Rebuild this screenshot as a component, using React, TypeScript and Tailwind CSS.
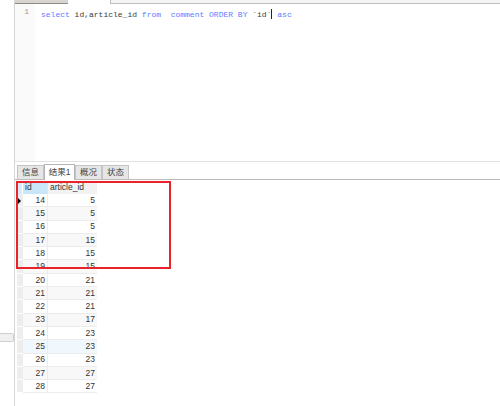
const rows: [number, number][] = [
  [14, 5],
  [15, 5],
  [16, 5],
  [17, 15],
  [18, 15],
  [19, 15],
  [20, 21],
  [21, 21],
  [22, 21],
  [23, 17],
  [24, 23],
  [25, 23],
  [26, 23],
  [27, 27],
  [28, 27],
];

const tabs = ["信息", "结果1", "概况", "状态"];

const App = () => {
  return (
    <div className="relative flex h-[406px] w-[500px] overflow-hidden bg-white font-['Liberation_Sans','Noto_Sans_CJK_SC',sans-serif] text-[#333]">
      {/* left strip with splitter handle */}
      <div className="flex w-[15px] shrink-0 flex-col border-r border-[#d6d6d6] bg-white">
        <div className="mt-[333px] h-[9px] w-[14px] rounded-r-[2px] border border-l-0 border-[#cfcfcf] bg-[#f0f0f0]" />
      </div>

      <div className="flex min-w-0 flex-1 flex-col">
        {/* toolbar remnant */}
        <div className="flex h-[4px] shrink-0">
          <div className="w-[53px] border-b border-[#8a8a8a] bg-[#d8d5cf]" />
          <div className="ml-[42px] flex-1 border-b border-l border-[#bdbdbd] bg-[#f4f4f4]" />
        </div>

        {/* sql editor */}
        <div className="flex h-[157px] shrink-0">
          <div className="w-[20px] bg-[#fafafa] pt-[3px] pr-[6px] text-right font-['Liberation_Mono',monospace] text-[8px] leading-[10px] text-[#9a9a9a]">
            1
          </div>
          <div className="pl-[6px] pt-[3px] font-['Liberation_Mono',monospace] text-[8px] leading-[10px] whitespace-pre text-[#3a3a3a]">
            <span className="text-[#5b7dff]">select</span> id,article_id <span className="text-[#5b7dff]">from</span>{"  "}
            <span className="text-[#5b7dff]">comment ORDER BY</span> {"`id`"}
            <span className="inline-block h-[10px] w-[1px] translate-y-[2px] bg-[#222]" />{" "}
            <span className="text-[#5b7dff]">asc</span>
          </div>
        </div>

        {/* result tabs */}
        <div className="flex h-[19px] shrink-0 flex-col border-t border-[#e2e2e2]">
          <div className="flex flex-1 items-end border-b border-[#bcbcbc] pl-[2px]">
            {tabs.map((t, i) =>
              i === 1 ? (
                <div
                  key={t}
                  className="-mb-px flex h-[16px] w-[31px] items-center justify-center border border-b-0 border-[#b4b4b4] bg-white text-[8.5px] text-[#444]"
                >
                  {t}
                </div>
              ) : (
                <div
                  key={t}
                  className="flex h-[14px] w-[27px] items-center justify-center border border-b-0 border-[#c4c4c4] bg-[#e6e6e6] text-[8.5px] text-[#444]"
                >
                  {t}
                </div>
              ),
            )}
          </div>
        </div>

        {/* result grid */}
        <div className="ml-[2px] mt-[1px] flex w-[80px] flex-col text-[8.5px]">
          <div className="flex h-[13px]">
            <div className="w-[6px] border-r border-white bg-[#d4ecfa]" />
            <div className="flex w-[25px] items-center border-r border-[#e4e4e4] bg-[#c8e6f8] pl-[2px]">id</div>
            <div className="flex w-[49px] items-center bg-[#f2f2f2] pl-[2px]">article_id</div>
          </div>
          {rows.map(([id, aid], i) => (
            <div
              key={id}
              className={`flex h-[13.3px] ${i === 11 ? "bg-[#f1f8fd]" : i % 2 === 1 ? "bg-[#f8f8f8]" : "bg-white"}`}
            >
              <div className="relative w-[6px] border-b border-white bg-[#ededed]">
                {i === 0 ? (
                  <div className="absolute left-0 top-[3px] h-0 w-0 border-y-[4px] border-l-[4px] border-y-transparent border-l-black" />
                ) : null}
              </div>
              <div className="flex w-[25px] items-center justify-end border-r border-b border-[#ececec] pr-[2px]">
                {id}
              </div>
              <div className="flex w-[49px] items-center justify-end border-b border-[#ececec] pr-[2px]">
                {aid}
              </div>
            </div>
          ))}
        </div>
      </div>

      {/* annotation box */}
      <div className="pointer-events-none absolute left-[16px] top-[181px] h-[88px] w-[155px] border-2 border-[#e8242a]" />
    </div>
  );
};

export default App;
